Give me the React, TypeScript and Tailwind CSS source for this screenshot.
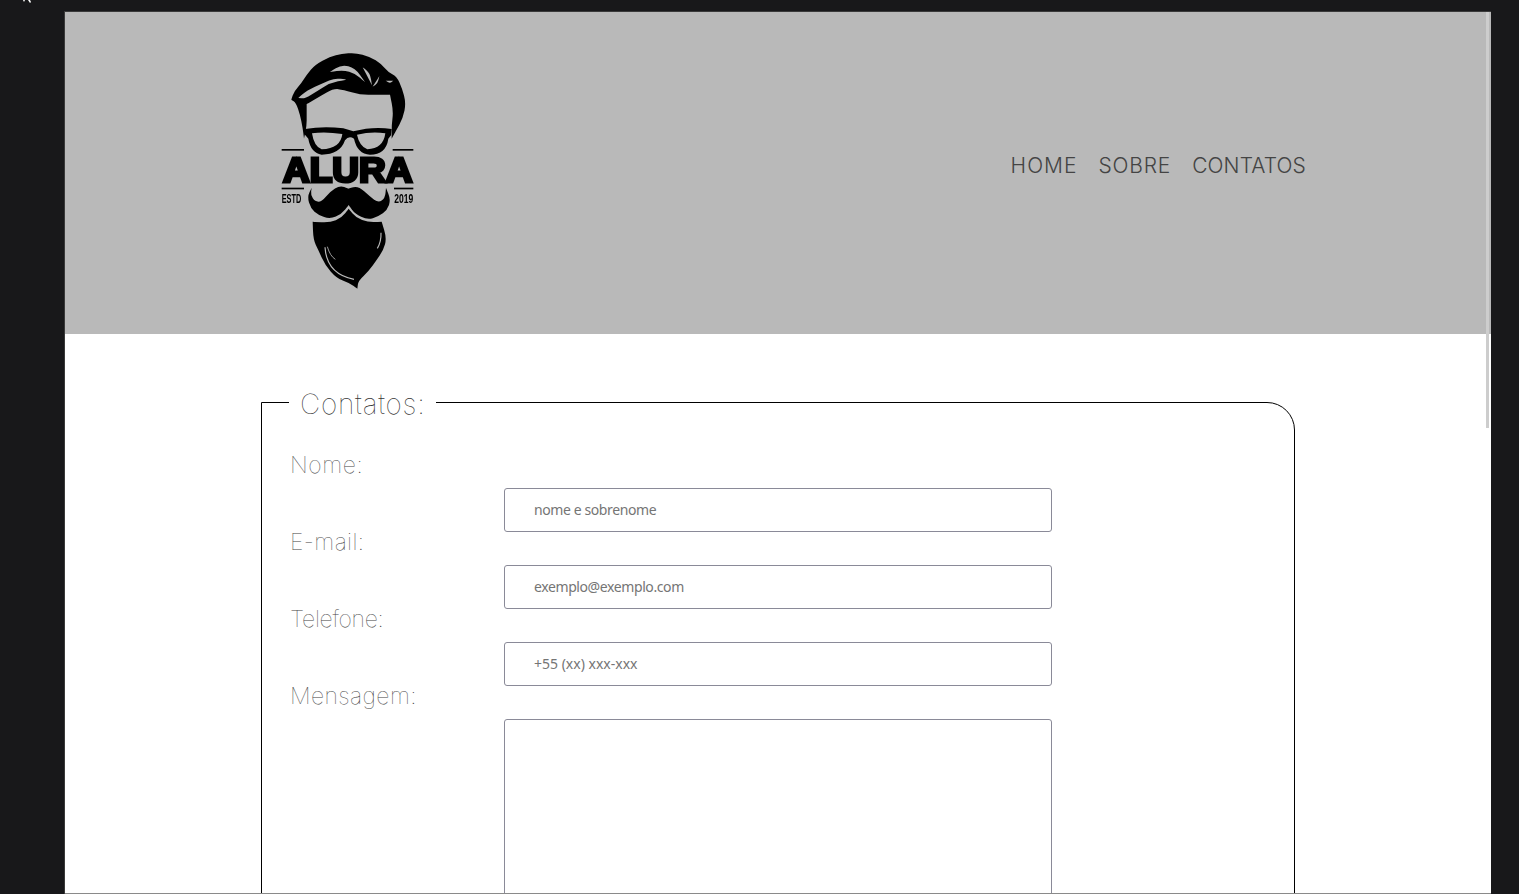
import React from 'react';

const fields = [
  { label: 'Nome:', placeholder: 'nome e sobrenome', type: 'text', tracking: 'tracking-[0.6px]', hint: 'tracking-[-0.4px]' },
  { label: 'E-mail:', placeholder: 'exemplo@exemplo.com', type: 'email', tracking: 'tracking-[0.4px]', hint: 'tracking-[-0.4px]' },
  { label: 'Telefone:', placeholder: '+55 (xx) xxx-xxx', type: 'tel', tracking: 'tracking-[-0.3px]', hint: 'tracking-[0px]' },
];

const navLinks = [
  { label: 'HOME', tracking: 'tracking-[1px]' },
  { label: 'SOBRE', tracking: 'tracking-[0.8px]' },
  { label: 'CONTATOS', tracking: 'tracking-[0.1px]' },
];

type Pt = [number, number];

// closed path through the midpoints, a doubled point gives a sharp tip
const smooth = (pts: Pt[]) => {
  const mid = (a: Pt, b: Pt) => `${(a[0] + b[0]) / 2} ${(a[1] + b[1]) / 2}`;
  let d = `M${mid(pts[pts.length - 1], pts[0])}`;
  pts.forEach((p, i) => {
    d += ` Q${p[0]} ${p[1]} ${mid(p, pts[(i + 1) % pts.length])}`;
  });
  return d + ' Z';
};

const hair: Pt[] = [
  [72, 272], [72, 272], [68, 240], [60, 200], [48, 165], [34, 155], [34, 155], [42, 130], [65, 105], [80, 80],
  [105, 50], [150, 26], [185, 18], [225, 14], [270, 26], [304, 48], [324, 72], [350, 85], [366, 120], [378, 165],
  [369, 210], [347, 250], [335, 272], [335, 272], [335, 230], [340, 190], [330, 140], [330, 140], [290, 140], [240, 140],
  [190, 125], [160, 122], [120, 145], [80, 168], [80, 168], [80, 200], [80, 235],
];

const strands: Pt[][] = [
  [[55, 150], [55, 150], [80, 128], [130, 105], [165, 90], [198, 95], [198, 95], [150, 105], [110, 130], [75, 152]],
  [[150, 72], [150, 72], [185, 50], [225, 60], [255, 102], [255, 102], [225, 76], [190, 66]],
  [[248, 58], [248, 58], [270, 75], [276, 112], [276, 112], [262, 85]],
  [[278, 116], [278, 116], [298, 85], [298, 85], [292, 108]],
  [[317, 98], [317, 98], [340, 98], [340, 98], [330, 106]],
];

const moustache: Pt[] = [
  [95, 113], [95, 113], [82, 140], [92, 175], [115, 195], [150, 207], [185, 192], [206, 165], [206, 165], [225, 192],
  [262, 209], [295, 200], [322, 180], [332, 150], [318, 113], [318, 113], [315, 145], [295, 158], [270, 140], [235, 108],
  [205, 116], [205, 116], [180, 106], [150, 125], [125, 155], [105, 155], [92, 135],
];

const beard: Pt[] = [
  [206, 176], [206, 176], [228, 203], [265, 217], [305, 215], [305, 215], [320, 265], [310, 300], [290, 330], [265, 365],
  [235, 392], [232, 416], [232, 416], [210, 400], [170, 385], [135, 345], [115, 300], [100, 270], [98, 215], [98, 215],
  [150, 218], [185, 203],
];

const Logo = () => (
  <svg viewBox="0 0 405 735" className="block h-[245px] w-[135px] shrink-0 blur-[0.4px]" aria-label="Alura">
    <path d={smooth(hair)} />
    {strands.map((s, i) => (
      <path key={i} d={smooth(s)} fill="#b9b9b9" />
    ))}
    {/* glasses */}
    <path
      fillRule="evenodd"
      d="M75 243 Q130 234 190 241 Q205 246 220 250 Q280 234 335 243 L333 262 L325 272 Q318 320 270 320 Q232 318 222 272 Q206 262 195 277 Q180 320 125 320 Q92 314 85 272 L75 260 Z M96 256 Q135 250 187 258 Q182 302 125 304 Q102 296 96 256 Z M231 260 Q275 250 316 256 Q310 302 262 304 Q238 294 231 260 Z"
    />
    {/* rules */}
    <rect x="5" y="303" width="67" height="5" />
    <rect x="338" y="303" width="62" height="5" />
    <rect x="5" y="419" width="67" height="5" />
    <rect x="342" y="419" width="58" height="5" />
    {/* wordmark */}
    <text
      x="9"
      y="403"
      textLength="388"
      lengthAdjust="spacingAndGlyphs"
      fontFamily="'Liberation Sans', sans-serif"
      fontWeight="700"
      fontSize="104"
      stroke="#000"
      strokeWidth="9"
    >
      ALURA
    </text>
    <text transform="scale(1 1.73)" x="5" y="269.4" fontFamily="'Liberation Sans', sans-serif" fontWeight="700" fontSize="22">
      ESTD
    </text>
    <text transform="scale(1 1.48)" x="343" y="314.9" fontFamily="'Liberation Sans', sans-serif" fontWeight="700" fontSize="25.6">
      2019
    </text>
    <g transform="translate(0 306)">
      <path d={smooth(moustache)} />
      <path d={smooth(beard)} />
      <path fill="none" stroke="#b9b9b9" strokeWidth="3.5" d="M135 292 Q140 372 222 388" />
      <path fill="none" stroke="#b9b9b9" strokeWidth="2.5" d="M142 290 Q150 318 166 328" />
      <path fill="none" stroke="#b9b9b9" strokeWidth="3.5" d="M303 248 Q304 275 292 295" />
    </g>
  </svg>
);

const App: React.FC = () => {
  return (
    <div className="relative h-[894px] overflow-hidden bg-[#18181a] pl-[64px] pr-[28px] pt-[11px]">
      {/* mouse pointer left in the capture */}
      <svg viewBox="0 0 10 4" className="absolute left-[22px] top-0 h-[4px] w-[10px]">
        <path d="M1 0 L2 2 L3 0 Z M6 0 L8 3 L9 2 L8 0 Z" fill="#ffffff" />
      </svg>

      <div className="relative h-[883px] overflow-hidden border-l border-t border-[#3a3a3a] bg-white font-['Inter',sans-serif]">
        <header className="flex h-[322px] items-center justify-between bg-[#b9b9b9] pb-[14px] pl-[215px] pr-[185px]">
          <div className="pt-[9px]">
            <Logo />
          </div>
          <nav className="flex gap-[21px] text-[21px] font-light text-[#444444]">
            {navLinks.map((link) => (
              <a key={link.label} href="#" className={link.tracking}>
                {link.label}
              </a>
            ))}
          </nav>
        </header>

        <form className="pl-[196px] pt-[51px]">
          <fieldset className="h-[600px] w-[1034px] rounded-tr-[28px] border border-black pl-[27px] pt-[36px]">
            <legend className="px-[11px] text-[28px] font-thin leading-[34px] tracking-[0.75px] text-[#333333]">
              <span className="relative top-[2px]">Contatos:</span>
            </legend>
            <div className="flex flex-col pl-[1px]">
              {fields.map((field) => (
                <div key={field.label}>
                  <label className={`block h-[33px] text-[23px] font-thin leading-[20px] text-[#444444] ${field.tracking}`}>
                    {field.label}
                  </label>
                  <input
                    type={field.type}
                    placeholder={field.placeholder}
                    className={`ml-[214px] block h-[44px] w-[548px] rounded-[3px] border border-[#8a8a98] pb-[2px] pl-[29px] font-['Noto_Sans',sans-serif] text-[14px] placeholder:text-[#757575] ${field.hint}`}
                  />
                </div>
              ))}
              <label className="block h-[33px] text-[23px] font-thin leading-[20px] tracking-[0.4px] text-[#444444]">
                Mensagem:
              </label>
              <textarea className="ml-[214px] block h-[300px] w-[548px] rounded-[3px] border border-[#8a8a98]" />
            </div>
          </fieldset>
        </form>

        {/* scrollbar */}
        <div className="absolute right-[2px] top-0 h-[416px] w-[3px] bg-[#cdcdcd]" />
      </div>
      <div className="absolute bottom-0 left-[65px] right-[28px] h-px bg-[#8a8a8a]" />
    </div>
  );
};

export default App;
